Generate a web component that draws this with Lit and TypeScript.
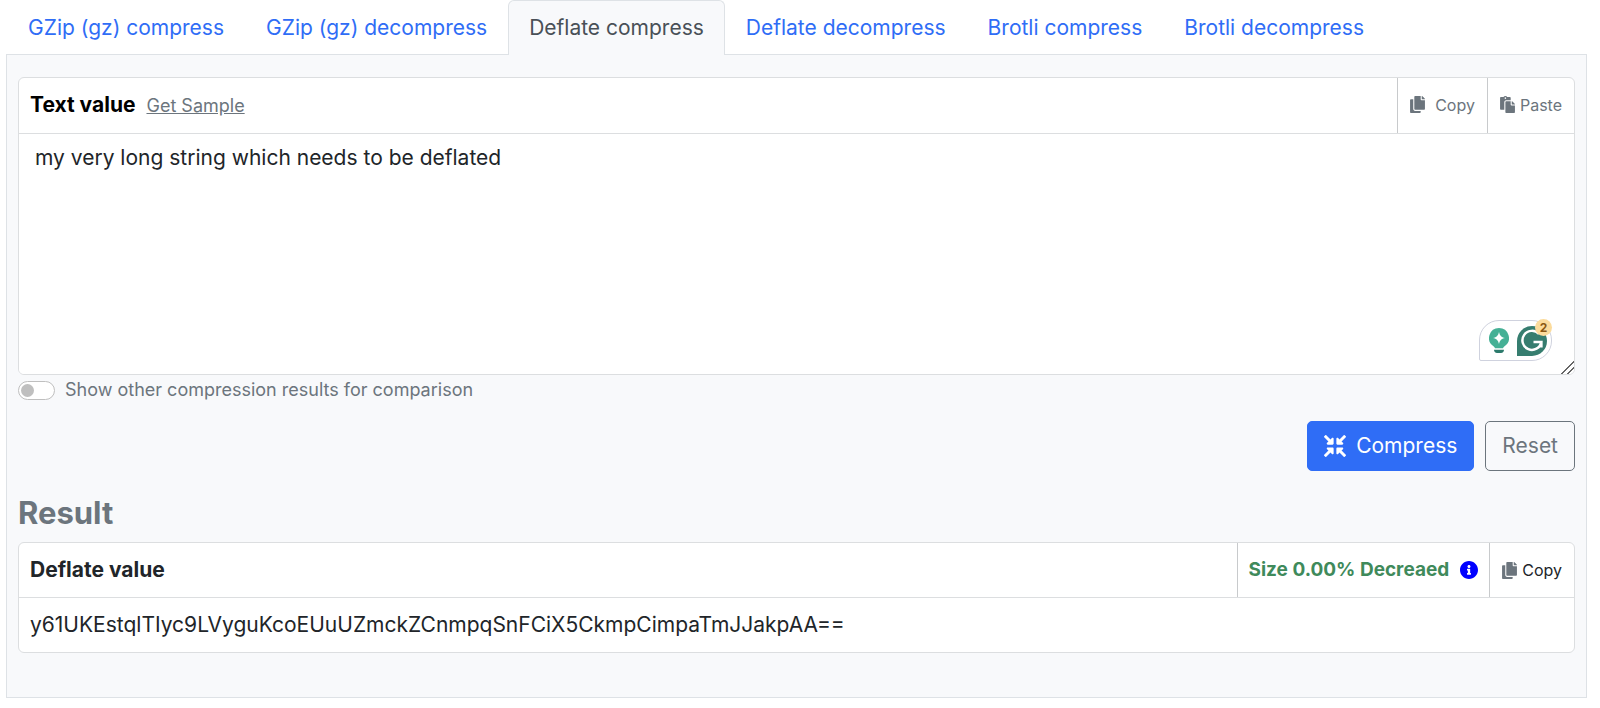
import { LitElement, html, svg, css } from "lit";
import { customElement, state } from "lit/decorators.js";
import { classMap } from "lit/directives/class-map.js";

const glyphs = {
  copy: {
    box: "0 0 448 512",
    d: "M320 448v40c0 13.255-10.745 24-24 24H24c-13.255 0-24-10.745-24-24V120c0-13.255 10.745-24 24-24h72v296c0 30.879 25.121 56 56 56h168zm0-344V0H152c-13.255 0-24 10.745-24 24v368c0 13.255 10.745 24 24 24h272c13.255 0 24-10.745 24-24V128H344c-13.2 0-24-10.8-24-24zm120.971-31.029L375.029 7.029A24 24 0 0 0 358.059 0H352v96h96v-6.059a24 24 0 0 0-7.029-16.97z",
  },
  paste: {
    box: "0 0 448 512",
    d: "M128 184c0-30.879 25.122-56 56-56h136V56c0-13.255-10.745-24-24-24h-80.61C204.306 12.89 183.637 0 160 0s-44.306 12.89-55.39 32H24C10.745 32 0 42.745 0 56v336c0 13.255 10.745 24 24 24h104V184zm32-144c13.255 0 24 10.745 24 24s-10.745 24-24 24-24-10.745-24-24 10.745-24 24-24zm184 248h104v200c0 13.255-10.745 24-24 24H184c-13.255 0-24-10.745-24-24V184c0-13.255 10.745-24 24-24h136v104c0 13.2 10.8 24 24 24zm104-38.059V256h-96v-96h6.059a24 24 0 0 1 16.97 7.029l65.941 65.941a24.002 24.002 0 0 1 7.03 16.971z",
  },
  info: {
    box: "8 8 496 496",
    d: "M256 8C119.043 8 8 119.083 8 256c0 136.997 111.043 248 248 248s248-111.003 248-248C504 119.083 392.957 8 256 8zm0 110c23.196 0 42 18.804 42 42s-18.804 42-42 42-42-18.804-42-42 18.804-42 42-42zm56 254c0 6.627-5.373 12-12 12h-88c-6.627 0-12-5.373-12-12v-24c0-6.627 5.373-12 12-12h12v-64h-12c-6.627 0-12-5.373-12-12v-24c0-6.627 5.373-12 12-12h64c6.627 0 12 5.373 12 12v100h12c6.627 0 12 5.373 12 12v24z",
  },
  compress: {
    box: "0 0 512 512",
    d: "M200 288H88c-21.4 0-32.1 25.8-17 41l32.9 31-99.2 99.3c-6.2 6.2-6.2 16.4 0 22.6l25.4 25.4c6.2 6.2 16.4 6.2 22.6 0L152 408l31.1 33c15.1 15.1 40.9 4.4 40.9-17V312c0-13.3-10.7-24-24-24zm112-64h112c21.4 0 32.1-25.9 17-41l-33-31 99.3-99.3c6.2-6.2 6.2-16.4 0-22.6L481.9 4.7c-6.2-6.2-16.4-6.2-22.6 0L360 104l-31.1-33C313.8 55.9 288 66.6 288 88v112c0 13.3 10.7 24 24 24zm96 136l33-31.1c15.1-15.1 4.4-40.9-17-40.9H312c-13.3 0-24 10.7-24 24v112c0 21.4 25.9 32.1 41 17l31-32.9 99.3 99.3c6.2 6.2 16.4 6.2 22.6 0l25.4-25.4c6.2-6.2 6.2-16.4 0-22.6L408 360zM183 71.1L152 104 52.7 4.7c-6.2-6.2-16.4-6.2-22.6 0L4.7 30.1c-6.2 6.2-6.2 16.4 0 22.6L104 152l-33 31.1C55.9 198.2 66.6 224 88 224h112c13.3 0 24-10.7 24-24V88c0-21.3-25.9-32-41-16.9z",
  },
};

const icon = (name: keyof typeof glyphs, size = "small") => html`
  <svg class="icon ${size}" viewBox=${glyphs[name].box} aria-hidden="true">
    ${svg`<path fill="currentColor" d=${glyphs[name].d}></path>`}
  </svg>`;

@customElement("writing-assistant")
class WritingAssistant extends LitElement {
  static styles = css`
    :host {
      display: flex;
      align-items: center;
      gap: 8px;
      box-sizing: border-box;
      width: 73px;
      height: 41px;
      padding-left: 9px;
      border: 1px solid #cfd2de;
      border-radius: 20px 20px 20px 2px;
      background: #fff;
    }
    .bulb { width: 20px; height: 25px; }
    .logo { width: 30px; height: 30px; }
    .count {
      position: absolute;
      top: -2px;
      right: -1px;
      width: 17px;
      height: 17px;
      border-radius: 50%;
      background: #fbdb9c;
      color: #8a5713;
      font: 700 12px/17px Inter, sans-serif;
      text-align: center;
    }
  `;
  render() {
    return html`
      <svg class="bulb" viewBox="0 0 20 25" aria-hidden="true">
        <path fill="#45b095" d="M10 0a10 10 0 0 1 5.5 18.3c-.8.6-1.3 1.2-1.5 1.9H6c-.2-.7-.7-1.3-1.5-1.9A10 10 0 0 1 10 0z"/>
        <path fill="#fff" d="M10 4c.9 3.800 2.200 5.100 6 6-3.800.9-5.100 2.200-6 6-.9-3.800-2.200-5.100-6-6 3.800-.9 5.100-2.200 6-6z"/>
        <path fill="#2c7a6c" d="M5 21.7h10c0 1.900-1.200 3.200-3 3.200H8c-1.800 0-3-1.300-3-3.200z"/>
      </svg>
      <svg class="logo" viewBox="0 0 30 30" aria-hidden="true">
        <path fill="#367d6f" d="M15 0a15 15 0 1 1 0 30H0V15A15 15 0 0 1 15 0z"/>
        <path fill="none" stroke="#fff" stroke-width="2.5" d="M22 8a9.5 9.5 0 1 0 2.3 8H16.5M24.4 15.5v6"/>
      </svg>
      <span class="count">2</span>`;
  }
}

@customElement("app-root")
class AppRoot extends LitElement {
  static styles = css`
    :host {
      display: block;
      padding: 0 13px 11px 6px;
      background: #fff;
      color: #212529;
      font: 400 21px/32px Inter, "Noto Sans", sans-serif;
    }
    *, *::before { box-sizing: border-box; }
    button, textarea { font: inherit; }
    button { cursor: pointer; }
    .icon { flex: none; display: block; }
    .small { width: 15px; height: 17px; color: #6c757d; }
    .medium { width: 18px; height: 18px; color: #00f; }
    .large { width: 22px; height: 22px; }

    .tabs { display: flex; padding-left: 1px; }
    .tab {
      padding: 11px 20px 10px;
      border: 1px solid transparent;
      border-bottom: 0;
      color: #2f6df6;
      text-decoration: none;
      white-space: nowrap;
    }
    .tab.active {
      position: relative;
      margin-bottom: -1px;
      border-color: #dee2e6;
      border-radius: 6px 6px 0 0;
      background: #f8f9fb;
      color: #495057;
    }
    .panel {
      padding: 22px 11px 44px;
      border: 1px solid #dee2e6;
      background: #f8f9fb;
    }
    .card {
      position: relative;
      border: 1px solid #dcdee0;
      border-radius: 6px;
      background: #fff;
      overflow: hidden;
    }
    .head {
      display: flex;
      align-items: stretch;
      border-bottom: 1px solid #dcdee0;
    }
    .title {
      display: flex;
      flex: 1;
      align-items: baseline;
      gap: 11px;
      padding: 11px;
      font-weight: 700;
    }
    .title.input { color: #000; }
    .sample { color: #6c757d; font-size: 18px; font-weight: 400; }
    .cell {
      display: flex;
      align-items: center;
      gap: 5px;
      padding: 0 12px;
      border: 0;
      border-left: 1px solid #c8cacc;
      background: none;
      color: #6c757d;
      font-size: 16px;
      white-space: nowrap;
    }
    .cell.wide { gap: 10px; }
    .cell.upper { padding-bottom: 2px; }
    .cell.dark { color: #212529; }
    .cell.size { gap: 11px; padding: 0 11px; color: #3f8a5b; font-size: 19px; font-weight: 700; }
    .text {
      display: block;
      width: 100%;
      padding: 8px 16px;
      border: 0;
      outline: 0;
      background: #fff;
      color: inherit;
      resize: vertical;
    }
    .text::-webkit-resizer {
      background: linear-gradient(135deg,
        transparent 12px, #666 12px, #666 13px,
        transparent 13px, transparent 16px,
        #666 16px, #666 17px, transparent 17px);
    }
    .assistant { position: absolute; right: 22px; bottom: 13px; }
    .compare {
      display: flex;
      align-items: center;
      gap: 10px;
      width: fit-content;
      color: #6c757d;
      font-size: 18px;
      line-height: 30px;
    }
    .switch {
      appearance: none;
      display: flex;
      align-items: center;
      width: 37px;
      height: 19px;
      margin: 0;
      padding: 0 2px;
      border: 1px solid #bfbfbf;
      border-radius: 10px;
      background: #fff;
    }
    .switch::before {
      content: "";
      width: 13px;
      height: 13px;
      border-radius: 50%;
      background: #bfbfbf;
    }
    .switch:checked { justify-content: flex-end; }
    .actions { display: flex; justify-content: flex-end; gap: 11px; padding-top: 16px; }
    .button {
      display: flex;
      align-items: center;
      gap: 10px;
      padding: 8px 16px;
      border: 1px solid #6c757d;
      border-radius: 5px;
      background: none;
      color: #6c757d;
    }
    .button.primary { border-color: #2f6df6; background: #2f6df6; color: #fff; }
    .heading {
      margin: 23px 0 10px;
      color: #6c757d;
      font-size: 31px;
      font-weight: 700;
      line-height: 38px;
    }
    .value { display: block; padding: 11px; overflow-wrap: anywhere; }
  `;

  @state() private active = 2;
  private tabs = [
    "GZip (gz) compress",
    "GZip (gz) decompress",
    "Deflate compress",
    "Deflate decompress",
    "Brotli compress",
    "Brotli decompress",
  ];

  render() {
    return html`
      <nav class="tabs">
        ${this.tabs.map(
          (label, i) => html`<a
            class=${classMap({ tab: true, active: i === this.active })}
            href="#"
            @click=${(e: Event) => { e.preventDefault(); this.active = i; }}
          >${label}</a>`
        )}
      </nav>
      <main class="panel">
        <section class="card">
          <div class="head">
            <div class="title input">
              <label for="source">Text value</label>
              <a class="sample" href="#">Get Sample</a>
            </div>
            <button class="cell upper wide">${icon("copy")}Copy</button>
            <button class="cell upper">${icon("paste")}Paste</button>
          </div>
          <textarea class="text" id="source" rows="7" spellcheck="false" .value=${"my very long string which needs to be deflated"}></textarea>
          <writing-assistant class="assistant"></writing-assistant>
        </section>
        <label class="compare">
          <input class="switch" type="checkbox" role="switch">
          Show other compression results for comparison
        </label>
        <div class="actions">
          <button class="button primary">${icon("compress", "large")}Compress</button>
          <button class="button">Reset</button>
        </div>
        <h2 class="heading">Result</h2>
        <section class="card">
          <div class="head">
            <label class="title" for="result">Deflate value</label>
            <div class="cell size">Size 0.00% Decreaed ${icon("info", "medium")}</div>
            <button class="cell dark">${icon("copy")}Copy</button>
          </div>
          <output class="value" id="result">y61UKEstqlTIyc9LVyguKcoEUuUZmckZCnmpqSnFCiX5CkmpCimpaTmJJakpAA==</output>
        </section>
      </main>`;
  }
}
